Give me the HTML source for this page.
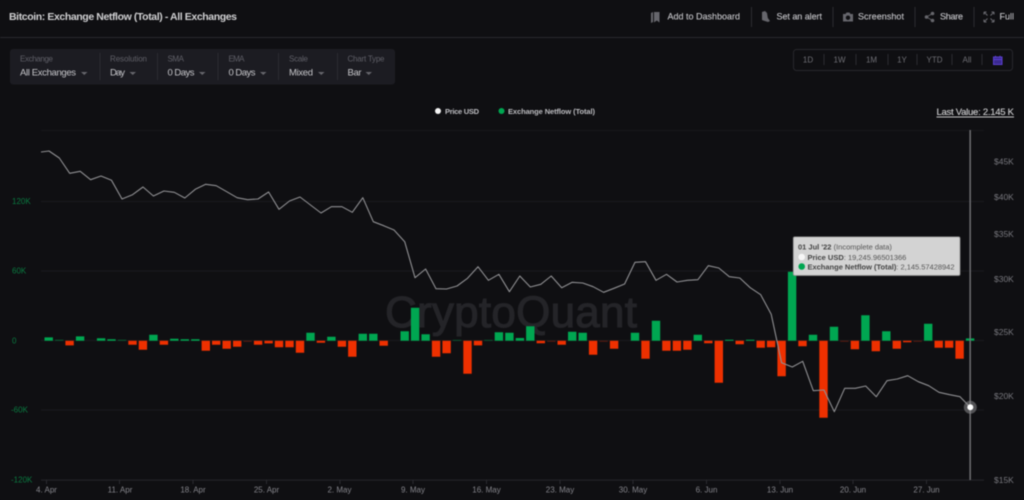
<!DOCTYPE html>
<html><head><meta charset="utf-8"><title>Bitcoin: Exchange Netflow (Total)</title>
<style>
html,body{margin:0;padding:0;background:#0f0f12;width:1024px;height:500px;overflow:hidden}
svg{display:block;filter:blur(.4px)}
text{font-family:"Liberation Sans",sans-serif}
</style></head><body>
<svg width="1024" height="500" viewBox="0 0 1024 500" xmlns="http://www.w3.org/2000/svg">
<rect width="1024" height="500" fill="#0f0f12"/>
<!-- header -->
<text x="9" y="20" font-size="10.5" font-weight="700" fill="#d0d0d2" textLength="228">Bitcoin: Exchange Netflow (Total) - All Exchanges</text>
<rect x="0" y="37" width="1024" height="1" fill="#28282d"/>
<g font-size="9" fill="#c4c4c8" stroke="#c4c4c8" stroke-width=".12">
<text x="667.5" y="19.5" textLength="72.5">Add to Dashboard</text>
<text x="776.5" y="19.5" textLength="45.5">Set an alert</text>
<text x="858" y="19.5" textLength="46">Screenshot</text>
<text x="940" y="19.5" textLength="23">Share</text>
<text x="999.5" y="19.5" textLength="14.5">Full</text>
</g>
<g fill="#2c2c31"><rect x="751" y="7" width="1" height="20"/><rect x="832.5" y="7" width="1" height="20"/><rect x="914.5" y="7" width="1" height="20"/><rect x="973.5" y="7" width="1" height="20"/></g>
<g fill="#66666c">
<path d="M651 13l2-1v10l-2 1zM654 12h5.5v10.5l-2.7-2-2.8 2z"/>
<path d="M762 12l3-1 2 2 .8 5 2.2 3-2 1-4-1.2-2-.8z"/>
<path d="M843 14h2.5l1-1.5h3l1 1.5h2.500v7.500h-10zM848 15.500a2.200 2.200 0 1 0 .01 0z" fill-rule="evenodd"/>
<circle cx="926.500" cy="17" r="1.800"/><circle cx="932.500" cy="13.500" r="1.800"/><circle cx="932.500" cy="20.500" r="1.800"/>
<path d="M926.500 17l6-3.500M926.500 17l6 3.500" stroke="#66666c" stroke-width=".8"/>
</g>
<path d="M984.500 12.500l3 3M993.500 12.500l-3 3M984.500 21.500l3-3M993.500 21.500l-3-3M984 12h2.500M984 12v2.500M994 12h-2.500M994 12v2.500M984 22h2.500M984 22v-2.500M994 22h-2.500M994 22v-2.500" stroke="#66666c" stroke-width="1.100" fill="none"/>
<!-- filter panel -->
<rect x="10" y="49" width="385" height="35.500" rx="3" fill="#1c1c22"/>
<g fill="#2b2b31"><rect x="99.500" y="53" width="1" height="27"/><rect x="157" y="53" width="1" height="27"/><rect x="217.500" y="53" width="1" height="27"/><rect x="278" y="53" width="1" height="27"/><rect x="337" y="53" width="1" height="27"/></g>
<g font-size="8" fill="#5f5f67">
<text x="20" y="61.500" textLength="33">Exchange</text>
<text x="110" y="61.500" textLength="37">Resolution</text>
<text x="167.500" y="61.500" textLength="16.500">SMA</text>
<text x="228.500" y="61.500" textLength="16">EMA</text>
<text x="289" y="61.500" textLength="19">Scale</text>
<text x="347.500" y="61.500" textLength="37">Chart Type</text>
</g>
<g font-size="9.500" fill="#c6c6ca">
<text x="20" y="75.500" textLength="56">All Exchanges</text>
<text x="110" y="75.500" textLength="15">Day</text>
<text x="167.500" y="75.500" textLength="27">0 Days</text>
<text x="228.500" y="75.500" textLength="27">0 Days</text>
<text x="289" y="75.500" textLength="24">Mixed</text>
<text x="347.500" y="75.500" textLength="14">Bar</text>
</g>
<g fill="#66666c">
<path d="M81 72h6.500l-3.250 3z"/><path d="M129.500 72h6.500l-3.250 3z"/><path d="M199 72h6.500l-3.250 3z"/><path d="M260 72h6.500l-3.250 3z"/><path d="M318 72h6.500l-3.250 3z"/><path d="M365.500 72h6.500l-3.250 3z"/>
</g>
<!-- range -->
<rect x="793.500" y="49.500" width="219" height="21" rx="3" fill="none" stroke="#27272c"/>
<g fill="#2a2a2f"><rect x="823.500" y="54" width="1" height="11"/><rect x="855.500" y="54" width="1" height="11"/><rect x="887.500" y="54" width="1" height="11"/><rect x="916.500" y="54" width="1" height="11"/><rect x="951.500" y="54" width="1" height="11"/><rect x="981.500" y="54" width="1" height="11"/></g>
<g font-size="8" fill="#6f6f75" text-anchor="middle">
<text x="808" y="62.500">1D</text><text x="839.500" y="62.500">1W</text><text x="871.500" y="62.500">1M</text><text x="902" y="62.500">1Y</text><text x="934.500" y="62.500">YTD</text><text x="967" y="62.500">All</text>
</g>
<path d="M993.500 57h8.500v7.500h-8.500zM993.500 59.500h8.500" fill="#3a2a90" stroke="#5b3fd0" stroke-width="1"/>
<path d="M995.500 55.800v2M1000 55.800v2" stroke="#5b3fd0" stroke-width="1"/>
<!-- legend -->
<circle cx="438" cy="111" r="3" fill="#f4f4f4"/>
<circle cx="501.500" cy="111" r="3" fill="#00a651"/>
<g font-size="7.500" font-weight="700" fill="#bcbcc0">
<text x="445" y="113.800" textLength="34">Price USD</text>
<text x="508" y="113.800" textLength="87">Exchange Netflow (Total)</text>
</g>
<text x="936.500" y="115" font-size="9.500" fill="#d0d0d2" stroke="#d0d0d2" stroke-width=".12" textLength="77.500">Last Value: 2.145 K</text>
<rect x="936.500" y="116.500" width="77.500" height="1" fill="#c8c8ca"/>
<!-- grid -->
<g fill="#1a1a1e"><rect x="41" y="130" width="943" height="1" fill="#17171b"/><rect x="41" y="201" width="943" height="1"/><rect x="41" y="270.500" width="943" height="1"/><rect x="41" y="340" width="943" height="1"/><rect x="41" y="409.500" width="943" height="1"/><rect x="41" y="479.500" width="943" height="1.200" fill="#222227"/></g>
<g fill="#2a2a2f"><rect x="46" y="480" width="1" height="4"/><rect x="119" y="480" width="1" height="4"/><rect x="192.500" y="480" width="1" height="4"/><rect x="266" y="480" width="1" height="4"/><rect x="339.500" y="480" width="1" height="4"/><rect x="412.500" y="480" width="1" height="4"/><rect x="486" y="480" width="1" height="4"/><rect x="559.500" y="480" width="1" height="4"/><rect x="632.500" y="480" width="1" height="4"/><rect x="706" y="480" width="1" height="4"/><rect x="779.500" y="480" width="1" height="4"/><rect x="852.500" y="480" width="1" height="4"/><rect x="926" y="480" width="1" height="4"/></g>
<!-- watermark -->
<text x="385" y="327" font-size="44" fill="#242428" stroke="#242428" stroke-width="1.100" textLength="252">CryptoQuant</text>
<!-- axis labels -->
<g font-size="8" fill="#0a7a40">
<text x="12" y="204">120K</text><text x="12" y="273.500">60K</text><text x="12" y="343.500">0</text><text x="11" y="412.500">-60K</text><text x="11" y="482.500">-120K</text>
</g>
<g font-size="8.500" fill="#77777d">
<text x="994" y="164.500">$45K</text><text x="994" y="200">$40K</text><text x="994" y="237">$35K</text><text x="994" y="282">$30K</text><text x="994" y="335">$25K</text><text x="994" y="399">$20K</text><text x="994" y="483">$15K</text>
</g>
<g font-size="8" fill="#85858b" text-anchor="middle">
<text x="46.500" y="492.500">4. Apr</text><text x="120" y="492.500">11. Apr</text><text x="193" y="492.500">18. Apr</text><text x="266.500" y="492.500">25. Apr</text><text x="339.500" y="492.500">2. May</text><text x="413" y="492.500">9. May</text><text x="486.500" y="492.500">16. May</text><text x="560" y="492.500">23. May</text><text x="633" y="492.500">30. May</text><text x="706.500" y="492.500">6. Jun</text><text x="780" y="492.500">13. Jun</text><text x="853" y="492.500">20. Jun</text><text x="926.500" y="492.500">27. Jun</text>
</g>
<!-- dim thin bars -->
<path d="M55 340.700h8.400v-1h-8.400zM117.800 340.700h8.400v-1h-8.400zM452.800 340.700h8.400v-.8h-8.400zM484.200 340.700h8.400v-.8h-8.400z" fill="#0a5a30"/>
<path d="M243.400 340.700h8.400v1h-8.400zM547.100 340.700h8.400v1h-8.400zM599.400 340.700h8.400v1h-8.400zM840.200 340.700h8.400v1h-8.400zM913.500 340.700h8.400v1h-8.400z" fill="#5a1a10"/>
<!-- green bars -->
<path fill="#00a651" d="M44.500 340.700h8.400v-3.300h-8.400zM75.900 340.700h8.400v-4.300h-8.400zM96.900 340.700h8.400v-2.500h-8.400zM107.300 340.700h8.400v-1.500h-8.400zM149.200 340.700h8.400v-6h-8.400zM170.100 340.700h8.400v-2h-8.400zM180.600 340.700h8.400v-1.500h-8.400zM191.100 340.700h8.400v-1.500h-8.400zM306.300 340.700h8.400v-8h-8.400zM327.200 340.700h8.400v-4h-8.400zM358.600 340.700h8.400v-7h-8.400zM369.100 340.700h8.400v-7h-8.400zM400.500 340.700h8.400v-9.500h-8.400zM410.900 340.700h8.400v-33h-8.400zM421.400 340.700h8.400v-6.500h-8.400zM494.700 340.700h8.400v-8.500h-8.400zM505.200 340.700h8.400v-8h-8.400zM515.700 340.700h8.400v-2.700h-8.400zM526.100 340.700h8.400v-14.500h-8.400zM568 340.700h8.400v-9h-8.400zM578.500 340.700h8.400v-8h-8.400zM630.800 340.700h8.400v-8h-8.400zM651.800 340.700h8.400v-20h-8.400zM693.600 340.700h8.400v-6h-8.400zM725.100 340.700h8.400v-1h-8.400zM746 340.700h8.400v-1h-8.400zM787.900 340.700h8.400v-69h-8.400zM808.800 340.700h8.400v-6h-8.400zM829.800 340.700h8.400v-14h-8.400zM861.200 340.700h8.400v-25.500h-8.400zM882.100 340.700h8.400v-9.500h-8.400zM924 340.700h8.400v-17h-8.400zM965.900 340.700h8.400v-2.300h-8.400z"/>
<!-- red bars -->
<path fill="#ee3000" d="M65.400 340.700h8.400v4.700h-8.400zM128.300 340.700h8.400v4h-8.400zM138.700 340.700h8.400v9h-8.400zM159.700 340.700h8.400v4h-8.400zM201.600 340.700h8.400v10h-8.400zM212 340.700h8.400v4h-8.400zM222.500 340.700h8.400v8h-8.400zM233 340.700h8.400v6h-8.400zM253.900 340.700h8.400v4h-8.400zM264.400 340.700h8.400v2.700h-8.400zM274.800 340.700h8.400v6.500h-8.400zM285.300 340.700h8.400v6.500h-8.400zM295.800 340.700h8.400v12h-8.400zM316.700 340.700h8.400v2h-8.400zM337.700 340.700h8.400v6h-8.400zM348.100 340.700h8.400v16h-8.400zM379.500 340.700h8.400v5h-8.400zM431.900 340.700h8.400v16h-8.400zM442.400 340.700h8.400v12.500h-8.400zM463.300 340.700h8.400v33h-8.400zM473.800 340.700h8.400v4.700h-8.400zM536.600 340.700h8.400v2.500h-8.400zM557.500 340.700h8.400v4h-8.400zM588.900 340.700h8.400v14h-8.400zM609.900 340.700h8.400v8h-8.400zM641.300 340.700h8.400v18h-8.400zM662.200 340.700h8.400v10h-8.400zM672.700 340.700h8.400v10h-8.400zM683.200 340.700h8.400v9h-8.400zM704.100 340.700h8.400v2.500h-8.400zM714.600 340.700h8.400v42h-8.400zM735.500 340.700h8.400v3.500h-8.400zM756.500 340.700h8.400v7h-8.400zM766.900 340.700h8.400v6.500h-8.400zM777.400 340.700h8.400v35.500h-8.400zM798.300 340.700h8.400v5.500h-8.400zM819.300 340.700h8.400v77h-8.400zM850.700 340.700h8.400v8.500h-8.400zM871.600 340.700h8.400v10.500h-8.400zM892.600 340.700h8.400v8h-8.400zM903 340.700h8.400v1.500h-8.400zM934.500 340.700h8.400v7h-8.400zM944.900 340.700h8.400v7h-8.400zM955.400 340.700h8.400v18h-8.400z"/>
<!-- crosshair -->
<rect x="969.400" y="130" width="1.500" height="350" fill="#6e6e72"/>
<!-- price line -->
<polyline fill="none" stroke="#8f8f92" stroke-width="1.100" stroke-linejoin="round" points="41,152 49,151 59.300,158 69.700,173.300 80.200,171.300 90.600,179.700 101,176 111.500,180.300 122,199 132.500,194.700 143,187 153.400,196 163.900,191 174.300,192.300 184.800,198 195.300,189.300 205.700,184.300 216.200,185.700 226.700,191.700 237.100,197.700 247.600,199.700 258,199 268.600,192 279,209.300 289.500,201 300,197 310.500,205 321,213 331.400,206.700 341.900,206.700 352.300,212.300 362.800,197.700 373.300,221.700 383.700,225.700 394,230 404.700,241.700 415,277.700 425.600,269 436,288.700 446.500,289 457,286 467.500,278.300 478,266.700 488.400,280.300 498.900,274.300 509.400,291.700 519.800,276 530.300,287 540.800,284.300 551.200,276 561.700,287.700 572.200,282.300 582.700,283 593.100,286.700 603.600,292.300 614,288.300 624.600,284 635,262.300 645.500,261.700 656,280.300 666.500,274.300 677,282 687.400,280.300 697.900,279.700 708.300,265.700 718.800,268 729.300,276.700 739.800,278 750.200,287.700 760.700,294.700 771.200,314.300 781.600,362.700 792.300,367 802.700,361.300 813.300,390.700 824,390 834.300,411.700 844.700,388.300 855.300,388.300 865.700,386 876.300,396.700 887,380.700 897.300,379 907.700,375.700 918.300,381.700 928.700,385.700 939,392.300 949.700,394.700 960,396.700 970.300,407.300"/>
<!-- marker -->
<circle cx="970.300" cy="407.300" r="6.500" fill="#8a8a8c" opacity=".55"/>
<circle cx="970.300" cy="407.300" r="3" fill="#fff"/>
<!-- tooltip -->
<rect x="793.300" y="236.900" width="166.700" height="38.600" rx="1.500" fill="#d3d3d3" stroke="#8f8f8f" stroke-width=".8"/>
<text x="798" y="249.500" font-size="7.500" fill="#555"><tspan font-weight="700" fill="#444">01 Jul '22</tspan> (Incomplete data)</text>
<circle cx="801.700" cy="257" r="3.300" fill="#f6f6f6"/>
<text x="807.500" y="259.800" font-size="7.500" fill="#555"><tspan font-weight="700" fill="#444">Price USD</tspan>: 19,245.96501366</text>
<circle cx="801.700" cy="266.500" r="3.300" fill="#00a651"/>
<text x="807.500" y="269.300" font-size="7.500" fill="#555" textLength="147"><tspan font-weight="700" fill="#444">Exchange Netflow (Total)</tspan>: 2,145.57428942</text>
</svg>
</body></html>
